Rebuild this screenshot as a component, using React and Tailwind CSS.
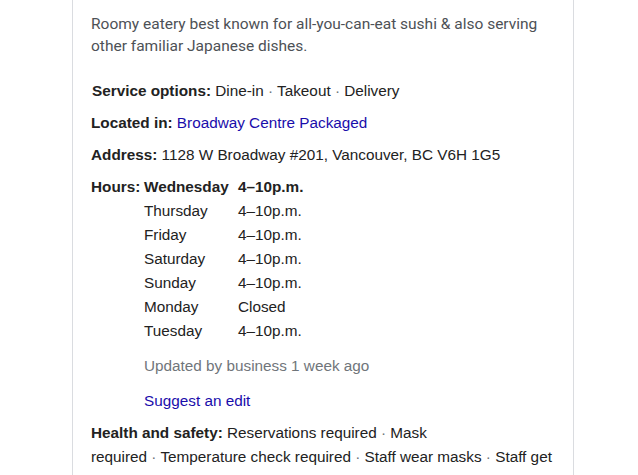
import React from "react";

const hours = [
  ["Thursday", "4–10p.m."],
  ["Friday", "4–10p.m."],
  ["Saturday", "4–10p.m."],
  ["Sunday", "4–10p.m."],
  ["Monday", "Closed"],
  ["Tuesday", "4–10p.m."],
];

function Dot() {
  return <span className="text-[#70757a]"> · </span>;
}

export default function App() {
  return (
    <div className="w-full h-[475px] bg-white overflow-hidden">
      <div
        className="ml-[72px] w-[502px] h-[475px] border-x border-[#dadce0] pl-[18px] pr-[18px] pt-[13px] text-[15.3px] text-[#222]"
        style={{ fontFamily: "Arial, 'Liberation Sans', sans-serif" }}
      >
        <div
          className="leading-[22px] text-[15.5px] text-[#4d5156]"
          style={{ fontFamily: "Roboto, 'Liberation Sans', sans-serif" }}
        >
          Roomy eatery best known for all-you-can-eat sushi &amp; also serving
          <br />
          other familiar Japanese dishes.
        </div>

        <div className="mt-[23px] leading-[22px] pl-px">
          <span className="font-bold">Service options:</span> Dine-in
          <Dot />Takeout<Dot />Delivery
        </div>

        <div className="mt-[10px] leading-[22px]">
          <span className="font-bold">Located in:</span>{" "}
          <span className="text-[#1a0dab]">Broadway Centre Packaged</span>
        </div>

        <div className="mt-[10px] leading-[22px]">
          <span className="font-bold">Address:</span> 1128 W Broadway #201, Vancouver, BC V6H 1G5
        </div>

        <div className="mt-[9px] flex">
          <div className="w-[53px] font-bold leading-[24px]">Hours:</div>
          <div className="flex flex-col">
            <div className="flex leading-[24px] font-bold">
              <div className="w-[94px]">Wednesday</div>
              <div>4–10p.m.</div>
            </div>
            {hours.map(([d, h]) => (
              <div key={d} className="flex leading-[24px]">
                <div className="w-[94px]">{d}</div>
                <div>{h}</div>
              </div>
            ))}
            <div className="mt-[12px] leading-[22px] text-[#70757a]">
              Updated by business 1 week ago
            </div>
            <div className="mt-[13px] leading-[22px] text-[#1a0dab]">Suggest an edit</div>
          </div>
        </div>

        <div className="mt-[9px] leading-[24px]">
          <span className="font-bold">Health and safety:</span> Reservations required
          <Dot />Mask
          <br />
          required<Dot />Temperature check required<Dot />Staff wear masks<Dot />Staff get
        </div>
      </div>
    </div>
  );
}
